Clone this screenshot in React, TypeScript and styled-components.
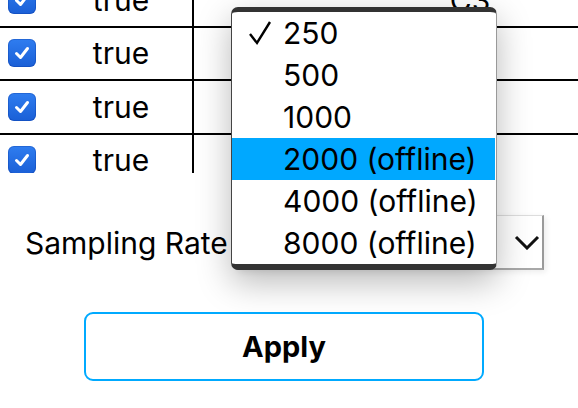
import { useLayoutEffect, useRef } from "react";
import styled, { createGlobalStyle } from "styled-components";

const channels = [
  { enabled: true, name: "C3" },
  { enabled: true, name: "C4" },
  { enabled: true, name: "Cz" },
  { enabled: true, name: "Pz" },
];

const rates = [
  { label: "250", checked: true },
  { label: "500" },
  { label: "1000" },
  { label: "2000 (offline)", active: true },
  { label: "4000 (offline)" },
  { label: "8000 (offline)" },
];

export default function App() {
  const scroller = useRef<HTMLDivElement>(null);

  useLayoutEffect(() => {
    if (scroller.current) scroller.current.scrollTop = 26;
  }, []);

  return (
    <>
      <GlobalStyle />
      <Page>
        <TableViewport ref={scroller}>
          <ChannelTable>
            <tbody>
              {channels.map((ch) => (
                <tr key={ch.name}>
                  <CheckCell>
                    <Checkbox>
                      <svg width="18" height="18" viewBox="0 0 18 18">
                        <polyline
                          points="3.5,9.5 7.5,13.5 14.5,4.5"
                          fill="none"
                          stroke="white"
                          strokeWidth="3"
                          strokeLinecap="round"
                          strokeLinejoin="round"
                        />
                      </svg>
                    </Checkbox>
                  </CheckCell>
                  <ValueCell>{String(ch.enabled)}</ValueCell>
                  <NameCell>{ch.name}</NameCell>
                </tr>
              ))}
            </tbody>
          </ChannelTable>
        </TableViewport>

        <SamplingRow>
          <Label>Sampling Rate</Label>
          <SelectBox>
            <svg width="26" height="16" viewBox="0 0 26 16">
              <polyline
                points="2,3 13,14 24,3"
                fill="none"
                stroke="#111"
                strokeWidth="3"
              />
            </svg>
          </SelectBox>
        </SamplingRow>

        <ApplyButton>Apply</ApplyButton>

        <Menu>
          {rates.map((r) => (
            <MenuItem key={r.label} $active={!!r.active}>
              <Tick>
                {r.checked && (
                  <svg width="24" height="26" viewBox="0 0 24 26">
                    <polyline
                      points="2,14 9,23 22,2"
                      fill="none"
                      stroke="#000"
                      strokeWidth="2.4"
                    />
                  </svg>
                )}
              </Tick>
              {r.label}
            </MenuItem>
          ))}
        </Menu>
      </Page>
    </>
  );
}

const GlobalStyle = createGlobalStyle`
  body {
    margin: 0;
    background: #fff;
    font-family: Inter, "Noto Sans", sans-serif;
    color: #000;
  }
`;

const Page = styled.div`
  position: relative;
  width: 578px;
  height: 408px;
  overflow: hidden;
  display: flex;
  flex-direction: column;
`;

const TableViewport = styled.div`
  height: 173px;
  overflow: hidden;
`;

const ChannelTable = styled.table`
  width: 746px;
  border-collapse: collapse;
  font-size: 30px;

  td {
    height: 51.5px;
    padding: 0;
    border-bottom: 2px solid #000;
  }
`;

const CheckCell = styled.td`
  width: 50px;
  padding-left: 8px !important;
  box-sizing: border-box;
`;

const Checkbox = styled.span`
  display: flex;
  align-items: center;
  justify-content: center;
  width: 28px;
  height: 28px;
  border-radius: 6px;
  background: linear-gradient(#2f7df0, #1a5fd6);
  box-shadow: inset 0 0 0 1px rgba(0, 40, 140, 0.25);
`;

const ValueCell = styled.td`
  width: 142px;
  text-align: center;
  border-right: 2px solid #000;
`;

const NameCell = styled.td`
  text-align: center;
`;

const SamplingRow = styled.div`
  display: flex;
  align-items: center;
  gap: 8px;
  margin-top: 42px;
  padding: 0 34px 0 25px;
`;

const Label = styled.span`
  font-size: 30px;
  white-space: nowrap;
`;

const SelectBox = styled.div`
  flex: 1;
  box-sizing: border-box;
  height: 55px;
  display: flex;
  align-items: center;
  justify-content: flex-end;
  padding-right: 2px;
  border-top: 1px solid #ddd;
  border-right: 2px solid #9a9a9a;
  border-bottom: 2px solid #a8a8a8;
  border-left: 1px solid #ccc;
  box-shadow: 2px 2px 6px rgba(0, 0, 0, 0.08);
`;

const ApplyButton = styled.button`
  box-sizing: border-box;
  margin: 42px 0 0 84px;
  width: 400px;
  height: 69px;
  background: #fff;
  border: 2px solid #00aaff;
  border-radius: 9px;
  font-family: Inter, "Noto Sans", sans-serif;
  font-size: 29px;
  font-weight: 700;
  color: #000;
`;

const Menu = styled.div`
  position: absolute;
  left: 231px;
  top: 7px;
  width: 266px;
  box-sizing: border-box;
  background: #fff;
  border: 1px solid #444;
  border-right-color: #999;
  border-top: 5px solid #333;
  border-bottom: 6px solid #333;
  border-radius: 7px;
  box-shadow: 0 12px 34px rgba(0, 0, 0, 0.28);
  overflow: hidden;
`;

const MenuItem = styled.div<{ $active: boolean }>`
  display: flex;
  align-items: center;
  height: 42px;
  margin-right: 1px;
  font-size: 30px;
  white-space: nowrap;
  background: ${({ $active }) => ($active ? "#00a8ff" : "transparent")};
`;

const Tick = styled.span`
  display: flex;
  align-items: center;
  justify-content: center;
  width: 51px;
  padding-left: 4px;
  box-sizing: border-box;
`;
